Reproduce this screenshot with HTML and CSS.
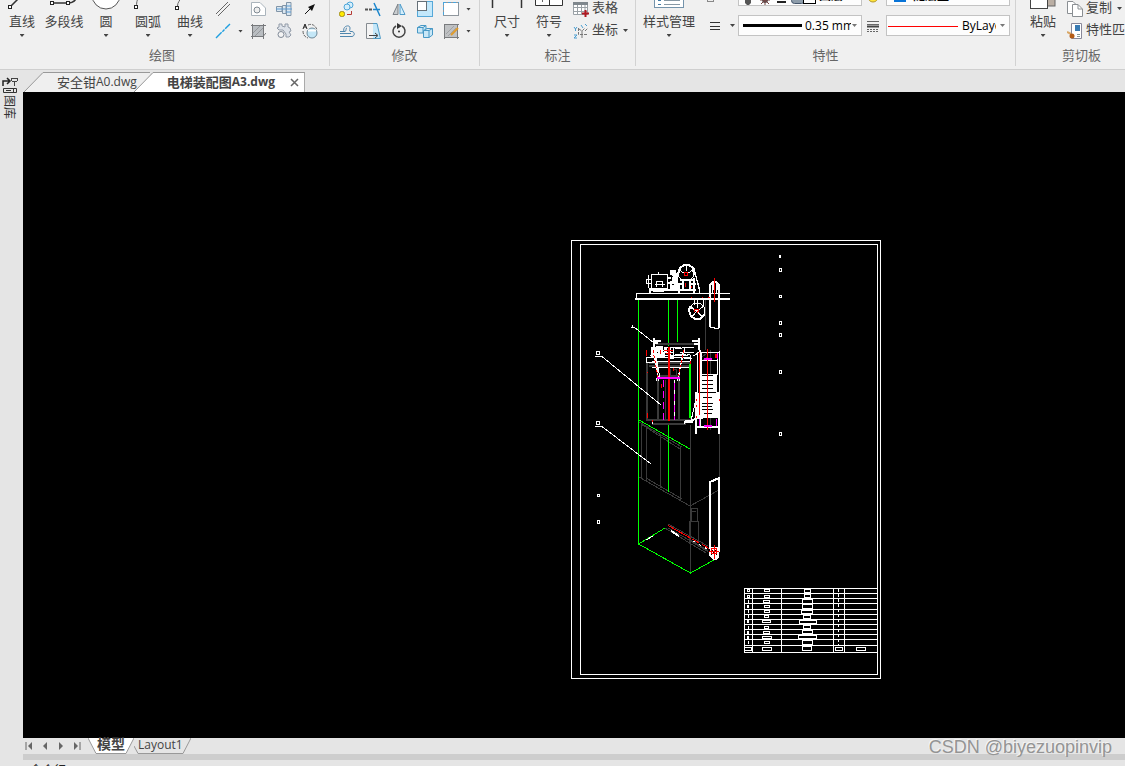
FILE: index.html
```html
<!DOCTYPE html>
<html lang="zh-CN">
<head>
  <meta charset="UTF-8">
  <meta name="viewport" content="width=device-width, initial-scale=1.0">
  <title>电梯装配图A3.dwg</title>
  <link rel="stylesheet" href="styles.css">
</head>
<body>
  <header class="ribbon">
    <section class="group draw">
      <div class="tools">
        <button class="big"><svg width="32" height="32"><path class="ink" d="M5 28L28 5"/><rect class="node" x="2.500" y="27.500" width="3" height="3"/></svg><span>直线</span><i class="caret"></i></button>
        <button class="big"><svg width="32" height="32"><path class="ink" d="M4 25H20C26 25 28 22 29 18"/><rect class="node" x="2.500" y="23.500" width="3" height="3"/><rect class="node" x="18.500" y="23.500" width="3" height="3"/></svg><span>多段线</span><i class="caret none"></i></button>
        <button class="big"><svg width="32" height="32"><circle cx="16" cy="17" r="14" fill="#fff" stroke="#555"/></svg><span>圆</span><i class="caret"></i></button>
        <button class="big"><svg width="32" height="32"><path class="thin" d="M4.500 28C4.500 20 8 12 27 6"/><rect class="node" x="2.500" y="27.500" width="3" height="3"/></svg><span>圆弧</span><i class="caret"></i></button>
        <button class="big"><svg width="32" height="32"><path class="thin" d="M3.500 28C3.500 24 6 23 7 19S20 4 28 6"/><rect class="node" x="1.500" y="28.500" width="3" height="3"/></svg><span>曲线</span><i class="caret"></i></button>
        <div class="icons draw-icons">
          <button aria-label="双线"><svg width="16" height="16"><path class="thin" d="M1 13L13 1M3 15L15 3"/></svg></button>
          <button aria-label="轮廓"><svg width="16" height="16"><path d="M1.500 1.500H10L15.500 7V14.500H1.500Z" fill="#fff" stroke="#aab4bc"/><circle cx="7" cy="9" r="3" fill="#eee" stroke="#7e8992"/></svg></button>
          <button aria-label="螺栓"><svg width="16" height="16"><path d="M.5 5.500H6V10.500H.5ZM6.500 4.500H10V12.500H6.500ZM10.500 1.500H15V14.500H10.500Z" fill="#dbe7f0" stroke="#8195a8"/><path d="M0 8H16M10 5H15M10 11H15" stroke="#5d9bd2"/></svg></button>
          <button aria-label="箭头"><svg width="16" height="16"><path d="M3 13L9 7" stroke="#111"/><path d="M13 3L6 6L10 10Z" fill="#111"/></svg></button>
          <button aria-label="构造线"><svg width="16" height="16"><path d="M1 15L15 1" stroke="#1f9fe0" stroke-width="1.400" stroke-dasharray="8 1 3 1"/></svg><i class="caret"></i></button>
          <button aria-label="填充"><svg width="16" height="16"><rect x="2" y="2" width="12" height="12" fill="#b9bdc1"/><path d="M1 2.500H16M1 13.500H13L16 10M2.500 1V16M13.500 1V16" stroke="#77797c" fill="none"/><path d="M3 10L10 3M5 13L13 5" stroke="#95989b"/></svg></button>
          <button aria-label="齿轮"><svg width="16" height="16"><path d="M3 1H6V3L9 4V1H12V4L14 5L15 8L13 9L15 12L13 14H10V11L7 7L3 7L1 5L3 4Z" fill="#dde2e9" stroke="#929ba8"/><circle cx="5" cy="11.500" r="3" fill="#f4f4f4" stroke="#7f8997"/></svg></button>
          <button aria-label="局部放大"><svg width="16" height="16"><path d="M6 2C10 0 14 3 15 7M1 8C1 12 3 14 6 15" fill="none" stroke="#666" stroke-dasharray="3 1"/><path d="M1 6L3 1L5 6M2 4H4" fill="none" stroke="#222"/><circle cx="10" cy="10" r="5" fill="#c4e7f7" stroke="#6e8999"/><path d="M6 7.500H14" stroke="#fff" stroke-width="2"/></svg></button>
        </div>
      </div>
      <h2>绘图</h2>
    </section>

    <section class="group modify">
      <div class="tools">
        <div class="icons modify-icons">
          <button aria-label="复制对象"><svg width="16" height="16"><circle cx="11" cy="4" r="3" fill="#d5eefb" stroke="#4da5d8"/><circle cx="8" cy="6" r="3" fill="#d5eefb" stroke="#4da5d8"/><rect x=".5" y="10.500" width="5" height="5" rx="2" fill="#ffe900" stroke="#a18c1a"/><path d="M8 13.500H12.500V10" fill="none" stroke="#b53b35"/></svg></button>
          <button aria-label="修剪"><svg width="16" height="16"><path d="M0 8.500H7" stroke="#555" stroke-width="2" stroke-dasharray="3 1"/><path d="M8 8.500H15M9 2L15 15" stroke="#1c86cc" stroke-width="1.500"/></svg></button>
          <button aria-label="镜像"><svg width="16" height="16"><path d="M7 3V13.500H2Z" fill="#c9cdd0" stroke="#7a8086"/><path d="M9 3V13.500H14Z" fill="#d5eefb" stroke="#4d9ac9"/></svg></button>
          <button aria-label="缩放"><svg width="16" height="16"><rect x=".5" y=".5" width="15" height="15" fill="#c3e8fb" stroke="#56a8d8"/><rect x=".5" y=".5" width="9" height="9" fill="#fff" stroke="#667078"/></svg></button>
          <button aria-label="分解"><svg width="16" height="16"><rect x=".5" y="1.500" width="15" height="13" fill="#fff" stroke="#8f979d"/><path d="M0 1.500H16M.5 1V15" stroke="#49a5dd" stroke-dasharray="3 2"/></svg><i class="caret"></i></button>
          <button aria-label="偏移"><svg width="16" height="16"><path d="M5 8.500C3 3 11 1 11 5C11 7 10 8 11 8.500H13C16 9 16 13 13 13.500H1M1 10.500H12M1 8.500H6C8 8 6 5 8 5" fill="none" stroke="#4f86ad"/></svg></button>
          <button aria-label="拉伸"><svg width="16" height="16"><path d="M8 .5H12L15.500 15.500H8" fill="#c4e7f9" stroke="#4f9bc6"/><path d="M8 .5H1.500V15.500H8" fill="#f4f4f4" stroke="#858b90"/><path d="M4 12.500H12M10 10L13 12.500L10 15" fill="none" stroke="#444"/></svg></button>
          <button aria-label="旋转"><svg width="16" height="16"><path d="M5 3A6 6 0 1 0 11 3" fill="none" stroke="#444" stroke-width="1.500"/><path d="M6 0L11 3L6 6Z" fill="#333"/><circle cx="8" cy="8.500" r="1" fill="#333"/></svg></button>
          <button aria-label="阵列"><svg width="16" height="16"><path d="M.5 4.500L4 2.500H9V8L6 10H.5ZM.5 4.500H6L9 2.500M6 4.500V10" fill="#c8e7f7" stroke="#4798c5"/><path d="M6.500 7.500L10 5.500H15.500V12L12 14.500H6.500ZM6.500 7.500H12L15.500 5.500M12 7.500V14.500" fill="#c8e7f7" stroke="#4798c5"/></svg></button>
          <button aria-label="编辑填充"><svg width="16" height="16"><rect x="2" y="2" width="12" height="12" fill="#bfc1c3"/><path d="M1 1.500H16M1 14.500H16M1.500 1V16M14.500 1V16" stroke="#797b7d"/><path d="M3 11L11 3M5 13L13 5" stroke="#a0a2a4"/><path d="M8 12L15 5" stroke="#e09b2c" stroke-width="2"/></svg><i class="caret"></i></button>
        </div>
      </div>
      <h2>修改</h2>
    </section>

    <section class="group annotate">
      <div class="tools">
        <button class="big"><svg width="32" height="32"><path class="ink" d="M1.500 8V30M30.500 8V30M2 14.500H30"/></svg><span>尺寸</span><i class="caret"></i></button>
        <button class="big"><svg width="32" height="32"><path d="M2.500 14.500H29.500V27.500H2.500ZM16.500 14V27" fill="#fff" stroke="#333"/><path class="thin" d="M9.500 17V24"/></svg><span>符号</span><i class="caret"></i></button>
        <div class="list">
          <button><svg width="16" height="16"><path d="M.5 1.500H14.500V13.500H.5ZM0 6.500H15M0 10.500H15M4.500 4V14M8.500 4V14M12 4V14" fill="#fff" stroke="#9aa1a6"/><path d="M0 2.500H15" stroke="#7f878d" stroke-width="3"/><path d="M9 12.500H16M12.500 9V16" stroke="#b01820" stroke-width="2"/></svg>表格</button>
          <button><svg width="16" height="16"><path d="M5.500 5V11.500H15M6 6L9 8L12 5M9 8V15M12 8L15 5" fill="none" stroke="#777" stroke-dasharray="3 1"/><path d="M1 4L2.500 6L4 4M2.500 6V8M1 12H4L1 15H4M8 2L10 5M12 1L14 3" fill="none" stroke="#4c9ed0"/></svg>坐标<i class="caret"></i></button>
        </div>
      </div>
      <h2>标注</h2>
    </section>

    <section class="group props">
      <div class="tools">
        <button class="big wide"><svg width="32" height="32"><rect x="1.500" y="2.500" width="29" height="27" fill="#fff" stroke="#7493ab"/><path d="M5 22.500H8M5 26.500H8" stroke="#447ba5"/><path d="M11 22.500H27M11 26.500H27" stroke="#8798a4"/></svg><span>样式管理</span><i class="caret"></i></button>
        <div class="prop-grid">
          <button aria-label="图层管理"><svg width="16" height="16"><rect x="1.500" y=".5" width="6" height="13" fill="#eee" stroke="#888"/><path d="M3 11.500H6" stroke="#888"/></svg></button>
          <div class="combo">
            <svg width="78" height="21"><path d="M6 12H12V18L10 20H8L6 18Z" fill="#555"/><circle cx="26" cy="15" r="3" fill="#555"/><path d="M26 10V20M21 15H31M22 19L30 11M30 19L22 11" stroke="#744"/><path d="M38 17H47" stroke="#222" stroke-width="2"/><rect x="52.500" y="11.500" width="13" height="7" rx="3" fill="#8e9dab" stroke="#44556b"/><rect x="69.500" y="7.500" width="12" height="11" fill="#fff" stroke="#000" transform="translate(-5 0)"/></svg>
            <select class="bold" aria-label="图层"><option>图层</option></select><i class="caret"></i>
          </div>
          <svg width="16" height="16"><circle cx="7" cy="9" r="5" fill="#ffe53b" stroke="#b59725"/><path d="M2 8A5 5 0 0 1 7 4V9Z" fill="#e2432f"/></svg>
          <div class="combo">
            <svg width="24" height="21"><rect x="7" y="5" width="12" height="12" fill="#0874d8"/></svg>
            <select class="bold" aria-label="颜色"><option>随层蓝</option></select><i class="caret"></i>
          </div>
          <button aria-label="线宽"><svg width="16" height="16"><path d="M4 4.500H14M4 8.500H14M4 11.500H14" stroke="#333"/></svg><i class="caret"></i></button>
          <div class="combo">
            <svg width="64" height="19"><path d="M4 9.500H63" stroke="#000" stroke-width="3"/></svg>
            <select aria-label="线宽值"><option>0.35 mm</option></select><i class="caret"></i>
          </div>
          <svg width="16" height="16"><path d="M1 3.500H13M1 6.500H13" stroke="#666"/><path d="M1 8.500H13" stroke="#444" stroke-width="2"/><path d="M1 11.500H13M1 13.500H13" stroke="#666" stroke-dasharray="2 1"/></svg>
          <div class="combo">
            <svg width="73" height="19"><path d="M1 10.500H71" stroke="#f00"/></svg>
            <select class="narrow" aria-label="线型"><option>ByLayer</option></select><i class="caret"></i>
          </div>
        </div>
      </div>
      <h2>特性</h2>
    </section>

    <section class="group clipboard">
      <div class="tools">
        <button class="big"><svg width="32" height="32"><rect x="12" y="2" width="16" height="26" fill="#baaea3" stroke="#666"/><rect x="3.500" y="8.500" width="17" height="22" fill="#fff" stroke="#444"/></svg><span>粘贴</span><i class="caret"></i></button>
        <div class="list">
          <button><svg width="16" height="16"><path d="M.5 .5H6L9.500 4V12.500H.5Z" fill="#fff" stroke="#8a8f93"/><path d="M5.500 3.500H11L15.500 8V15.500H5.500Z" fill="#fff" stroke="#8a8f93"/><path d="M11 3.500V8H15" fill="none" stroke="#8a8f93"/></svg>复制<i class="caret"></i></button>
          <button><svg width="16" height="16"><path d="M4.500 .5H14.500V15.500H4.500Z" fill="#fff" stroke="#889"/><rect x="8" y="2" width="5" height="6" fill="#397bb3"/><path d="M10 11.500H13M10 13.500H13" stroke="#899"/><path d="M0 9L4 11" stroke="#d9a766" stroke-width="2"/><circle cx="5" cy="13" r="2.500" fill="#b45c17"/></svg>特性匹配</button>
        </div>
      </div>
      <h2>剪切板</h2>
    </section>
  </header>

  <div class="workspace">
    <aside class="sidebar">
      <button>
        <svg width="16" height="18"><path d="M1 9V4H8M5 1L8 4L5 7" fill="none" stroke="#222" stroke-width="1.500"/><path d="M9 1.500H16M10 4.500H15M12.500 4V9M9.500 1V4M15.500 1V4" fill="none" stroke="#444"/><path d="M1.500 11.500H14.500V15.500H1.500ZM4 13.500H9M11.500 12V15" fill="none" stroke="#333"/></svg>
        <span>图库</span>
      </button>
    </aside>

    <main>
      <nav class="file-tabs">
        <a class="tab" href="#"><svg width="20" height="20"><path d="M0 20L20 .5V20Z" fill="#efefef"/><path d="M0 20L19 .5H20" fill="none" stroke="#999"/></svg><span class="name">安全钳<b>A0.dwg</b></span></a>
        <a class="tab active" href="#"><svg width="20" height="20"><path d="M0 20L20 .5V20Z" fill="#fff"/><path d="M0 20L19 .5H20" fill="none" stroke="#999"/></svg><span class="name">电梯装配图<b>A3.dwg</b><svg width="9" height="9"><path d="M1 1L8 8M8 1L1 8" stroke="#666" stroke-width="1.500"/></svg></span></a>
      </nav>

      <div class="canvas">
        <svg width="100%" height="100%" shape-rendering="crispEdges" fill="none" role="img" aria-label="电梯装配图">
          <g transform="translate(-23 -92)">
            <!-- sheet frame -->
            <g stroke="#fff">
              <rect x="571.500" y="240.500" width="309" height="438"/>
              <rect x="580.500" y="244.500" width="297" height="430"/>
            </g>

            <!-- shaft -->
            <g stroke="#3a3a3a">
              <path d="M705.500 300V350M719.500 330V552M690.500 425V573M641.500 424V478M646.500 427V481M660.500 434V488M680.500 446V500"/>
              <path d="M639 422L682 447M641 424L680 449M639 477L690 506L719 490M646 478L682 499"/>
              <path d="M691.500 508V521M697.500 508V521M691 508.500H697M692 511.500H696M689.500 521V542M698.500 521V542M689 521.500H698M690 541.500H698"/>
              <path d="M668 524L708 546M665 528L706 553M668 528L708 551"/>
              <path d="M691 541L708 551" stroke-width="2"/>
            </g>
            <g stroke="#0f0">
              <path d="M638.500 300V544L690.500 573L714 560M638.500 544L665 528M668.500 300V346M677.500 300V342M668.500 424V492M639 420L690 449"/>
            </g>
            <path d="M646 540L653 536" stroke="#fff"/>
            <path d="M671 531L679 536" stroke="#fff" stroke-width="2"/>
            <path d="M668 525.500L710 549" stroke="#f00" stroke-dasharray="26 2 8 3"/>
            <path d="M693 541L709 550" stroke="#fff" stroke-dasharray="2 5"/>

            <!-- machine room -->
            <g stroke="#fff">
              <path d="M636.500 299V293.500H730"/>
              <path d="M635 299H730" stroke-width="2"/>
              <path d="M651.500 274.500H667.500V288.500H651.500ZM656.500 287V281.500H662.500V287M655 284.500H665M658.500 272V274M648.500 275V288M646 279.500H651M646.500 279V284M646 283.500H651"/>
              <path d="M650 288V293M650 290H696M667 278H671M667 283H671M653 291H664M679 283V293M683 279V290M690 279V290M694 278V293" stroke-width="2"/>
              <path d="M670 270H675V273H677V281H675V288H670V281H672V274H670Z" fill="#fff"/>
              <path d="M671 276.500H673M672 284.500H674" stroke="#000"/>
              <path d="M677 278V290M680 280H694M677 284H683M689 284H696" stroke-width="2"/>
              <circle cx="686" cy="273" r="8"/>
              <path d="M678 274L680 268L684 265H689L693 268L694 275" stroke-width="2"/>
              <path d="M686 265V271M679 270L684 273M693 270L688 273M694 268L700 293M696 276L700 290"/>
              <path d="M697 299V308M694.500 299V305M703.500 300V307"/>
              <circle cx="697" cy="311" r="8"/>
              <path d="M690 306L689 311L691 316L695 319H700L704 315" stroke-width="2"/>
              <path d="M697 311L690 306M697 311L704 306M697 311L691 318M697 311L703 318M696 311L690 307M698 311L703 306"/>
              <path d="M710 327V285L713 282H716L719 285V328" stroke-width="2"/>
              <path d="M712.500 283V293M713.500 282V290M716.500 282V293M717.500 284V290M710 327L719 329"/>
            </g>
            <g stroke="#f00">
              <circle cx="686" cy="274" r="2"/>
              <path d="M694.500 312V309.500H698.500V312M697.500 311V313"/>
              <path d="M714.500 278V302M685.500 283V287M691.500 286V288M691 297.500H692M702 297.500H703M708 297.500H710"/>
            </g>

            <!-- car -->
            <g stroke="#3a3a3a">
              <path d="M656 344H698M646 420H691M652 424H686M647 362V420M649 363H690M649 366H690M657 376H680M679 379V419M658 379V419" stroke-width="2"/>
              <path d="M665.500 380V420M672.500 369H676.500V375H670.500V369M700 358L709 352M700 362L708 357M690 362V420M710.500 350V430"/>
            </g>
            <g stroke="#fff">
              <path d="M654 338V352M654 343H658M653 341H661M699 338V350M692 341H699M694 344H699" stroke-width="2"/>
              <path d="M651 347H656V356H651ZM656 346H662V351H656ZM657 353H664V357H657ZM664 347H666V352H664ZM670 355H673V358H670Z" fill="#fff"/>
              <path d="M656 350H672M658 352.500H674M670.500 348V357M673.500 347V356M650 355.500H688M646 357.500H691M652 361.500H690M646 362.500H656M652 367.500H691M675 349L690 347M680 352H694M693 356L700 352M684 358H692"/>
              <path d="M652 347.500H694M675 354.500H690" stroke-dasharray="11 1 5 1"/>
              <path d="M653 350L659 381M685 348L677 381M656 356L660 378M683 352L679 375M656 378V381M679 378V381M654 350L658 372M684 350L682 360"/>
              <path d="M646.500 357V362M690.500 355V368M674.500 380V420M652.500 421V424M684.500 421V424M685 422.500H693M691 421L697 395M694 418H703"/>
              <path d="M685 421H692L697 417" stroke-width="2"/>
            </g>
            <path d="M669 347V421" stroke="#f00" stroke-width="2"/>
            <g stroke="#f00">
              <path d="M653 350L658 378M684 350L678 376" stroke-dasharray="3 2"/>
              <path d="M664 350H673M666 353H671M660.500 350V354M646.500 350V356M647 372H648M647 413V418M673 368V371M690 361V365M661 384V388M652 420V422"/>
            </g>
            <path d="M690 364V418" stroke="#0f0" stroke-width="2"/>
            <path d="M657 378H680" stroke="#f0f" stroke-width="2"/>
            <path d="M663.500 380V420M674.500 383V420" stroke="#f0f" stroke-dasharray="7 4"/>

            <!-- counterweight -->
            <g stroke="#fff">
              <path d="M697.500 352V395M697 352.500H719M699 360H718M717.500 352V375M701.500 352V375M719.500 351V434"/>
              <path d="M700 350V426M696 392V434M719 392V434M696 427H720" stroke-width="2"/>
            </g>
            <path d="M701 374H717V392H720V418H696V392H701Z" fill="#fff"/>
            <path d="M702 375.500H713M702 380.500H713M702 384.500H713M702 388.500H713M698 392.500H716M703 397.500H712M702 403.500H713M702 406.500H712M702 409.500H713M704 413.500H712" stroke="#000"/>
            <path d="M707.500 349V430M699.500 352V415" stroke="#f00"/>
            <path d="M696 400H697M696 406H697M719 400H720M716 354V358M696 417H697" stroke="#f00" stroke-width="2"/>
            <path d="M704 359H712M704 426H712" stroke="#f0f" stroke-width="2"/>
            <path d="M699.500 419V426M716.500 419V426M717.500 353V359" stroke="#f0f"/>

            <!-- lower rope -->
            <path d="M710 549V482L719 478V552" stroke="#fff" stroke-width="2"/>
            <path d="M710 547H719V557L716 560H713L709 555Z" fill="#fff"/>
            <path d="M711 549L717 555M717 549L711 555" stroke="#000"/>
            <circle cx="714" cy="551" r="3" stroke="#f00"/>
            <path d="M714.500 545V559M709 551.500H719" stroke="#f00"/>

            <!-- leaders and notes -->
            <g stroke="#fff">
              <path d="M631 327H635M632.500 325V327M634 327L654 343M595 356.500H602L661 405M595 426.500H602L651 464"/>
              <rect x="596.500" y="351.500" width="3" height="3"/>
              <rect x="596.500" y="421.500" width="3" height="3"/>
              <rect x="597.500" y="494.500" width="2" height="2"/>
              <rect x="597.500" y="520.500" width="2" height="3"/>
              <path d="M779 255.500H781M779 256.500H781M779 257.500H781"/>
              <rect x="779.500" y="268.500" width="2" height="3"/>
              <rect x="779.500" y="295.500" width="2" height="2"/>
              <rect x="779.500" y="321.500" width="2" height="3"/>
              <rect x="779.500" y="333.500" width="2" height="3"/>
              <rect x="779.500" y="370.500" width="2" height="3"/>
              <rect x="779.500" y="432.500" width="2" height="3"/>
            </g>

            <!-- parts list -->
            <g stroke="#fff">
              <path d="M744 588.500H877M744 593.500H877M744 598.500H877M744 603.500H877M744 609.500H877M744 614.500H877M744 619.500H877M744 624.500H877M744 629.500H877M744 634.500H877M744 639.500H877M744 645.500H877M744 652.500H877"/>
              <path d="M744.500 588V653M752.500 588V653M781.500 588V653M833.500 588V653M844.500 588V653"/>
              <path d="M747.500 589.500H749.500V591.500H747.500ZM747.500 595.500H749.500V597.500H747.500Z"/>
              <path d="M748.500 600V603M748.500 610V613M748.500 615V618M748.500 626V629M748.500 641V644"/>
              <path d="M748 605V608M748 620V623M748 631V634M748 636V639" stroke-width="2"/>
              <path d="M764.500 589.500H769.500V591.500H764.500ZM764.500 595.500H769.500V597.500H764.500ZM763.500 600.500H769.500V602.500H763.500ZM764.500 605.500H769.500V607.500H764.500ZM764.500 610.500H769.500V612.500H764.500ZM764.500 615.500H768.500V617.500H764.500ZM762.500 620.500H770.500V622.500H762.500ZM764.500 626.500H768.500V628.500H764.500ZM763.500 631.500H769.500V633.500H763.500ZM762.500 636.500H771.500V638.500H762.500ZM764.500 641.500H769.500V643.500H764.500ZM762.500 647.500H771.500V650.500H762.500Z"/>
              <path d="M804.500 589.500H810.500V592.500H804.500ZM804.500 594.500H810.500V597.500H804.500ZM802.500 599.500H812.500V603.500H802.500ZM802.500 604.500H812.500V608.500H802.500ZM801.500 610.500H812.500V613.500H801.500ZM803.500 615.500H810.500V618.500H803.500ZM799.500 620.500H816.500V623.500H799.500ZM803.500 625.500H810.500V628.500H803.500ZM802.500 630.500H812.500V633.500H802.500ZM798.500 635.500H816.500V638.500H798.500ZM802.500 640.500H812.500V644.500H802.500ZM802.500 646.500H811.500V650.500H802.500Z"/>
              <path d="M838.500 589V645" stroke-dasharray="3 2"/>
              <path d="M744.500 647.500H751.500V650.500H744.500ZM835.500 647.500H842.500V650.500H835.500ZM856.500 647.500H865.500V650.500H856.500Z"/>
            </g>
          </g>
        </svg>
      </div>

      <nav class="sheet-tabs">
        <button aria-label="第一个"><svg width="8" height="8"><path d="M1 0V8" stroke="#666"/><path d="M7 0V8L3 4Z" fill="#666"/></svg></button>
        <button aria-label="上一个"><svg width="8" height="8"><path d="M6 0V8L2 4Z" fill="#666"/></svg></button>
        <button aria-label="下一个"><svg width="8" height="8"><path d="M2 0V8L6 4Z" fill="#666"/></svg></button>
        <button aria-label="最后一个"><svg width="8" height="8"><path d="M7 0V8" stroke="#666"/><path d="M1 0V8L5 4Z" fill="#666"/></svg></button>
        <a class="sheet active" href="#"><svg width="8" height="16"><path d="M0 0H8V16Z" fill="#fff"/><path d="M0 0L8 15.500" stroke="#999"/></svg><span>模型</span><svg width="8" height="16"><path d="M0 0H8L0 16Z" fill="#fff"/><path d="M8 0L0 15.500" stroke="#999"/></svg></a>
        <a class="sheet" href="#"><svg width="4" height="16"><path d="M0 8L4 15.500" stroke="#999"/></svg><span>Layout1</span><svg width="8" height="16"><path d="M8 0L0 15.500" stroke="#999"/></svg></a>
      </nav>
      <div class="splitter"></div>
      <div class="command">命令行:</div>
    </main>
  </div>
  <div class="watermark">CSDN @biyezuopinvip</div>
</body>
</html>
```
FILE: styles.css
```css
* {
  box-sizing: border-box;
}
body {
  margin: 0;
  height: 100vh;
  display: flex;
  flex-direction: column;
  position: relative;
  overflow: hidden;
  background: #e5e5e5;
  color: #444;
  font-family: "Noto Sans CJK SC", sans-serif;
  font-size: 13px;
}
button {
  display: flex;
  align-items: center;
  padding: 0;
  border: none;
  background: none;
  color: inherit;
  font: inherit;
  white-space: nowrap;
}
a {
  color: inherit;
  text-decoration: none;
}
svg {
  display: block;
  flex: none;
}

/* ribbon */
.ribbon {
  display: flex;
  flex: none;
  height: 70px;
  overflow: hidden;
  background: #f0f0f0;
  border-bottom: 1px solid #cfcfcf;
}
.group {
  display: flex;
  flex-direction: column;
  justify-content: flex-end;
  flex: none;
  height: 66px;
  border-right: 1px solid #d2d2d2;
}
.group h2 {
  margin: 3px 0 1px;
  font-size: 13px;
  font-weight: normal;
  line-height: 20px;
  text-align: center;
  color: #666;
}
.draw {
  width: 330px;
  padding: 0 6px 0 1px;
}
.modify {
  width: 150px;
}
.annotate {
  width: 156px;
}
.props {
  width: 380px;
}
.clipboard {
  width: 132px;
}
.tools {
  display: flex;
  align-items: flex-end;
}
.big {
  flex-direction: column;
  flex: none;
  width: 42px;
  height: 64px;
}
.big span {
  line-height: 21px;
}
.big .caret {
  margin: 3px 0 0;
}
.wide {
  width: 66px;
}
.ink {
  fill: none;
  stroke: #333;
  stroke-width: 1.5;
}
.thin {
  fill: none;
  stroke: #666;
}
.node {
  fill: #fff;
  stroke: #222;
}
.caret {
  flex: none;
  width: 5px;
  height: 3px;
  margin-left: 7px;
  background: #444;
  clip-path: polygon(0 0, 100% 0, 50% 100%);
}
.caret.none {
  visibility: hidden;
}
.icons {
  display: grid;
  grid-auto-rows: 22px;
}
.draw-icons {
  grid-template-columns: 35px 26px 26px 16px;
  margin-left: 4px;
}
.modify-icons {
  grid-template-columns: 26px 26px 26px 26px 30px;
  margin-left: 9px;
}
.annotate .tools,
.clipboard .tools {
  padding-left: 6px;
}
.list button {
  align-items: flex-start;
  height: 22px;
  margin-left: 3px;
  line-height: 18px;
}
.list svg {
  margin: 3px 3px 0 0;
}
.list .caret {
  margin: 9px 0 0 5px;
}
.prop-grid {
  display: grid;
  grid-template-columns: 28px 124px 16px 124px;
  align-items: center;
  gap: 9px 4px;
  margin: 0 0 6px 4px;
}
.prop-grid button .caret {
  margin-left: 8px;
}
.combo {
  display: flex;
  align-items: center;
  height: 21px;
  padding-right: 4px;
  background: #fdfdfd;
  border: 1px solid #c3c3c3;
}
.combo select {
  flex: 1;
  min-width: 0;
  padding: 0 0 0 2px;
  border: none;
  appearance: none;
  background: none;
  color: #000;
  font: 12px "Open Sans", "Noto Sans CJK SC", sans-serif;
  overflow: hidden;
}
.combo .bold {
  font-weight: bold;
}
.combo .caret {
  margin-left: 1px;
  background: #777;
}
.combo .narrow + .caret {
  margin-left: 4px;
}

/* workspace */
.workspace {
  display: flex;
  flex: 1;
  min-height: 0;
}
.sidebar {
  width: 23px;
  padding: 7px 0 0 2px;
}
.sidebar button {
  flex-direction: column;
}
.sidebar span {
  writing-mode: vertical-rl;
  text-orientation: sideways;
  font-size: 12px;
  line-height: 16px;
  color: #333;
}
main {
  display: flex;
  flex-direction: column;
  flex: 1;
  min-width: 0;
}
.file-tabs {
  display: flex;
  align-items: flex-end;
  flex: none;
  height: 22px;
  padding-left: 1px;
}
.tab {
  display: flex;
  height: 20px;
}
.name {
  display: flex;
  align-items: center;
  padding: 0 13px 2px;
  background: #efefef;
  border-top: 1px solid #999;
}
.name b {
  font: 12px "Open Sans", sans-serif;
}
.name svg {
  margin: 2px 0 0 15px;
}
.tab.active {
  margin-left: -16px;
}
.active .name {
  padding-right: 5px;
  background: #fff;
  border-right: 1px solid #aaa;
  font-weight: bold;
}
.active .name b {
  font-weight: bold;
}
.canvas {
  flex: 1;
  min-height: 0;
  overflow: hidden;
  background: #000;
}
.sheet-tabs {
  display: flex;
  align-items: center;
  flex: none;
  height: 16px;
  padding-left: 1px;
}
.sheet-tabs button {
  width: 16px;
  padding-left: 1px;
}
.sheet {
  display: flex;
  height: 16px;
  font: 12px/14px "Open Sans", "Noto Sans CJK SC", sans-serif;
}
.sheet span {
  border-bottom: 1px solid #999;
}
.sheet.active {
  font-size: 14px;
  line-height: 12px;
  font-weight: bold;
}
.sheet.active span {
  padding: 0 1px 3px;
  background: #fff;
}
.splitter {
  flex: none;
  height: 6px;
  background: #cdcdcd;
}
.command {
  flex: none;
  height: 6px;
  padding: 2px 0 0 7px;
  overflow: hidden;
  font-size: 12px;
  line-height: 16px;
  color: #222;
}
.watermark {
  position: absolute;
  right: 13px;
  bottom: 8px;
  font: 18px/22px "Liberation Sans", sans-serif;
  color: #949494;
  text-shadow: -1px -1px 0 #f4f4f4;
}
```
